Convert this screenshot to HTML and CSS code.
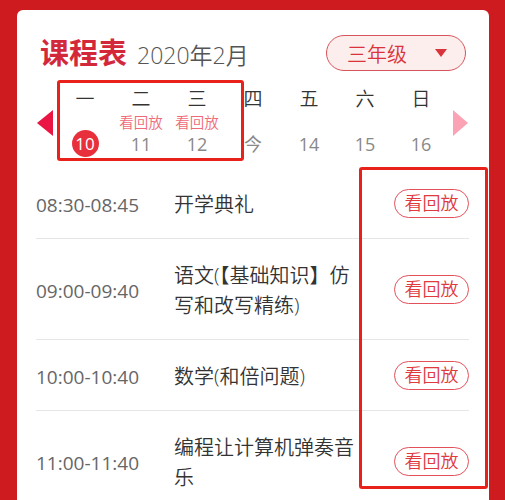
FILE: index.html
```html
<!DOCTYPE html>
<html lang="zh">
<head>
<meta charset="utf-8">
<title>课程表</title>
<link rel="stylesheet" href="styles.css">
</head>
<body>
<div class="card">
  <div class="header">
    <div class="title"><span class="main">课程表</span><span class="month">2020年2月</span></div>
    <div class="grade"><span>三年级</span><span class="caret"></span></div>
  </div>
  <div class="week">
    <span class="arrow left"></span>
    <div class="days">
      <div class="day"><span class="wd">一</span><span class="tag"></span><span class="date today">10</span></div>
      <div class="day"><span class="wd">二</span><span class="tag">看回放</span><span class="date">11</span></div>
      <div class="day"><span class="wd">三</span><span class="tag">看回放</span><span class="date">12</span></div>
      <div class="day"><span class="wd">四</span><span class="tag"></span><span class="date">今</span></div>
      <div class="day"><span class="wd">五</span><span class="tag"></span><span class="date">14</span></div>
      <div class="day"><span class="wd">六</span><span class="tag"></span><span class="date">15</span></div>
      <div class="day"><span class="wd">日</span><span class="tag"></span><span class="date">16</span></div>
    </div>
    <span class="arrow right"></span>
  </div>
  <div class="list">
    <div class="row"><span class="time">08:30-08:45</span><span class="name">开学典礼</span><span class="btn">看回放</span></div>
    <div class="row"><span class="time">09:00-09:40</span><span class="name">语文(【基础知识】仿写和改写精练)</span><span class="btn">看回放</span></div>
    <div class="row"><span class="time">10:00-10:40</span><span class="name">数学(和倍问题)</span><span class="btn">看回放</span></div>
    <div class="row"><span class="time">11:00-11:40</span><span class="name">编程让计算机弹奏音乐</span><span class="btn">看回放</span></div>
  </div>
  <div class="mark mark-days"></div>
  <div class="mark mark-btns"></div>
</div>
</body>
</html>
```
FILE: styles.css
```css
html, body {
  margin: 0;
  padding: 0;
  height: 500px;
  overflow: hidden;
}
body {
  background: #cd1b20;
  padding: 10px 16px 0 17px;
  font-family: "Open Sans", "Noto Sans CJK SC", sans-serif;
  box-sizing: border-box;
}
.card {
  position: relative;
  width: 472px;
  height: 560px;
  background: #fff;
  border-radius: 6px;
  box-sizing: border-box;
}
.header {
  display: flex;
  align-items: center;
  justify-content: space-between;
  padding: 25px 23px 0 23px;
  height: 36px;
}
.title {
  display: flex;
  align-items: baseline;
}
.main {
  font-size: 29px;
  font-weight: bold;
  color: #d3273a;
  line-height: 36px;
}
.month {
  font-size: 23px;
  font-weight: 350;
  color: #555;
  margin-left: 10px;
}
.grade {
  width: 140px;
  height: 36px;
  box-sizing: border-box;
  border: 1px solid #d6555a;
  border-radius: 18px;
  background: #fdeeee;
  display: flex;
  align-items: center;
  padding-left: 20px;
  color: #d9343c;
  font-size: 20px;
  font-weight: 350;
}
.caret {
  width: 0;
  height: 0;
  border-left: 6.5px solid transparent;
  border-right: 6.5px solid transparent;
  border-top: 8px solid #d9343c;
  margin-left: 28px;
}
.week {
  display: flex;
  align-items: center;
  padding: 16px 0 0 20px;
}
.arrow {
  width: 0;
  height: 0;
  border-top: 13px solid transparent;
  border-bottom: 13px solid transparent;
  margin-top: 1px;
}
.arrow.left {
  border-right: 16px solid #ea1542;
  margin-right: 4px;
}
.arrow.right {
  border-left: 15px solid #fba3b5;
  margin-left: 4px;
}
.days {
  display: flex;
}
.day {
  width: 56px;
  display: flex;
  flex-direction: column;
  align-items: center;
}
.wd {
  font-size: 19px;
  font-weight: 350;
  line-height: 24px;
  color: #333;
}
.tag {
  font-size: 14.5px;
  font-weight: 350;
  line-height: 16px;
  height: 16px;
  margin-top: 4px;
  color: #ee6a78;
}
.date {
  font-size: 18px;
  font-weight: 400;
  line-height: 26px;
  height: 26px;
  color: #888;
}
.date.today {
  width: 27px;
  height: 27px;
  line-height: 27px;
  margin-top: -1px;
  border-radius: 50%;
  background: #e8303c;
  color: #fff;
  text-align: center;
  font-size: 17px;
}
.list {
  padding: 11px 20px 0 19px;
}
.row {
  display: flex;
  align-items: center;
  padding: 18px 0 18px;
  border-bottom: 1px solid #e6e6e6;
}
.time {
  width: 138px;
  flex: none;
  padding-top: 4px;
  font-size: 19px;
  color: #666;
}
.name {
  width: 192px;
  flex: none;
  padding-top: 4px;
  font-size: 20px;
  font-weight: 350;
  line-height: 30px;
  color: #333;
}
.btn {
  margin-left: auto;
  width: 75px;
  height: 29px;
  box-sizing: border-box;
  border: 1px solid #e4505a;
  border-radius: 15px;
  color: #e0393e;
  font-size: 18px;
  font-weight: 350;
  line-height: 27px;
  text-align: center;
}
.mark {
  position: absolute;
  border: 3px solid #e8221b;
  border-radius: 3px;
  box-sizing: border-box;
}
.mark-days {
  left: 40px;
  top: 70px;
  width: 187px;
  height: 81px;
}
.mark-btns {
  left: 342px;
  top: 157px;
  width: 129px;
  height: 322px;
}
```
